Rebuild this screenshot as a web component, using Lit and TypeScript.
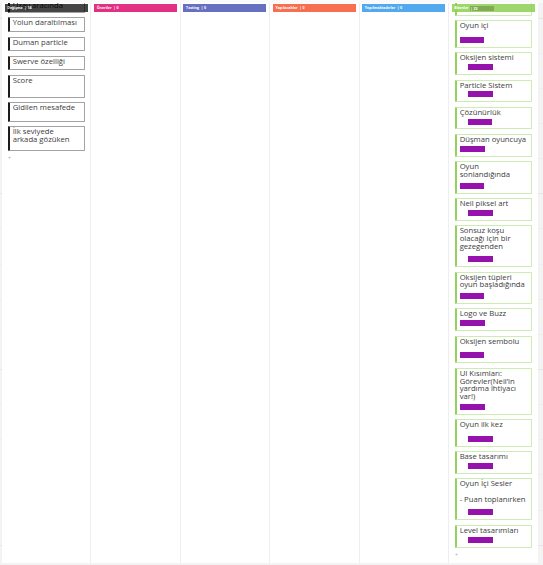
import { LitElement, html, css, nothing } from "lit";
import { customElement, property } from "lit/decorators.js";
import { styleMap } from "lit/directives/style-map.js";

interface Tag { indent: number; width: number }
interface Card { lines: string[]; height: number; tag?: Tag }
interface Column { title: string; count: string; color: string; accent?: string; edge?: string; cards?: Card[] }

const A: Tag = { indent: 0, width: 24 };
const B: Tag = { indent: 0, width: 25.5 };
const C: Tag = { indent: 8, width: 25.5 };
const D: Tag = { indent: 8, width: 24 };

const columns: Column[] = [
  {
    title: "Değişme", count: "14", color: "rgba(10,10,10,.76)", accent: "#1c1c1c", edge: "#a3a3a3",
    cards: [
      { lines: ["Uzay aracında"], height: 13 },
      { lines: ["Yolun daraltılması"], height: 15 },
      { lines: ["Duman particle"], height: 14.6 },
      { lines: ["Swerve özelliği"], height: 14.8 },
      { lines: ["Score"], height: 22.7 },
      { lines: ["Gidilen mesafede"], height: 19.5 },
      { lines: ["İlk seviyede", "arkada gözüken"], height: 24.6 },
    ],
  },
  { title: "Öneriler", count: "0", color: "#e23083" },
  { title: "Testing", count: "0", color: "#6770c0" },
  { title: "Yapılacaklar", count: "0", color: "#f76e51" },
  { title: "Yapılmaktadırlar", count: "0", color: "#53a9ee" },
  {
    title: "Bitenler", count: "23", color: "rgba(143,208,86,.88)", accent: "#93d25c", edge: "#cdecb3",
    cards: [
      { lines: [""], height: 15.1 },
      { lines: ["Oyun içi"], height: 27.6, tag: A },
      { lines: ["Oksijen sistemi"], height: 22.7, tag: C },
      { lines: ["Particle Sistem"], height: 22.7, tag: C },
      { lines: ["Çözünürlük"], height: 22.7, tag: D },
      { lines: ["Düşman oyuncuya"], height: 22.7, tag: B },
      { lines: ["Oyun", "sonlandığında"], height: 32.3, tag: A },
      { lines: ["Neil piksel art"], height: 22.7, tag: C },
      { lines: ["Sonsuz koşu", "olacağı için bir", "gezegenden"], height: 41.7, tag: C },
      { lines: ["Oksijen tüpleri", "oyun başladığında"], height: 32.2, tag: A },
      { lines: ["Logo ve Buzz"], height: 22.7, tag: B },
      { lines: ["Oksijen sembolu"], height: 27.5, tag: A },
      { lines: ["UI Kısımları:", "Görevler(Neil’in", "yardıma ihtiyacı", "var!)"], height: 46.7, tag: B },
      { lines: ["Oyun ilk kez"], height: 27.5, tag: C },
      { lines: ["Base tasarımı"], height: 22.7, tag: C },
      { lines: ["Oyun İçi Sesler", "", "- Puan toplanırken"], height: 41.8, tag: C },
      { lines: ["Level tasarımları"], height: 22.9, tag: C },
    ],
  },
];

@customElement("board-card")
class BoardCard extends LitElement {
  @property({ attribute: false }) card!: Card;
  static styles = css`
    :host {
      display: flex; flex-direction: column; flex: none; box-sizing: border-box;
      width: 77px; padding: 1px 0 3.8px 2.7px; background: #fff;
      border: 1px solid var(--edge); border-left: 2px solid var(--accent);
      border-radius: 1px; color: #3c3c3c;
    }
    .line { height: 7.75px; line-height: 7.75px; white-space: pre; font-size: 7.7px; }
    .tag { margin-top: auto; height: 6px; flex: none; background: #9612ad; }
  `;
  render() {
    const t = this.card.tag;
    return html`${this.card.lines.map((l) => html`<div class="line">${l}</div>`)}
      ${t ? html`<div class="tag" style=${styleMap({ width: `${t.width}px`, marginLeft: `${t.indent}px` })}></div>` : nothing}`;
  }
}

@customElement("app-root")
class AppRoot extends LitElement {
  static styles = css`
    :host {
      display: block; box-sizing: border-box; position: relative; width: 543px; height: 565px; overflow: hidden;
      padding: 0 0 2px 2px; font-family: "Open Sans", "Noto Sans", sans-serif;
      background:
        repeating-linear-gradient(to bottom, transparent 0 17.6px, #e7e7e7 17.6px 18.6px, transparent 18.6px 175.7px),
        repeating-linear-gradient(to bottom, transparent 0 17.6px, #eeeeee 17.6px 18.6px, transparent 18.6px 35.14px),
        #f3f3f3;
    }
    .board { display: grid; grid-template-columns: repeat(6, 89.4px); width: 536.4px; height: 563px; background: #fff; }
    .column { box-sizing: border-box; height: 563px; overflow: hidden; border-right: 1px solid #eeeeee; padding-left: 2.7px; }
    .column:last-child { border-right: 0; }
    .head {
      position: relative; z-index: 1; box-sizing: border-box; margin-top: 4px; height: 8px; width: 83px;
      padding-left: 2.6px; display: flex; align-items: center; color: #fff; font-size: 3.6px; line-height: 8px;
      font-weight: 700; white-space: pre;
    }
    .shade { width: 24.5px; height: 5px; line-height: 5px; background: rgba(105,135,70,.55); }
    .stack { display: flex; flex-direction: column; gap: 4.5px; padding-left: 3.3px; margin-top: -12.5px; }
    .stack.done { margin-top: -11.6px; gap: 4.58px; }
    .stack:not(.done) board-card:first-child { color: #000; }
    .add { height: 6px; line-height: 6px; font-size: 5px; color: #aaa; }
    .top { position: absolute; left: 0; top: 0; width: 543px; height: 3px; background: #fafafa; z-index: 2; }
  `;
  render() {
    return html`<div class="top"></div>
      <div class="board">
        ${columns.map((c, i) => html`<section class="column">
          <div class="head" style=${styleMap({ background: c.color })}>${c.title} ${i === 5
            ? html`<span class="shade"> | ${c.count}</span>`
            : html`<span> | ${c.count}</span>`}</div>
          ${c.cards ? html`<div class="stack ${i === 5 ? "done" : ""}"
              style=${styleMap({ "--edge": c.edge!, "--accent": c.accent! })}>
            ${c.cards.map((k) => html`<board-card .card=${k} style=${styleMap({ height: `${k.height}px` })}></board-card>`)}
            <div class="add">+</div>
          </div>` : nothing}
        </section>`)}
      </div>`;
  }
}
